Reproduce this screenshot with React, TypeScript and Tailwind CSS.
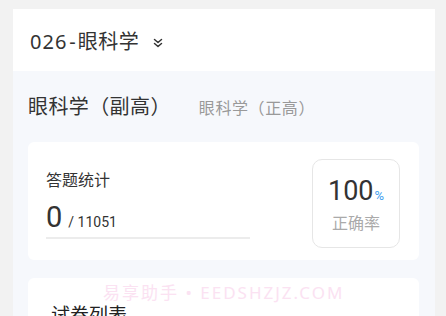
import React from "react";

export default function App() {
  return (
    <div className="relative w-[446px] h-[316px] overflow-hidden bg-[#f2f2f2] pt-[9px] pl-[13px] pr-[11px] font-['Noto_Sans','Noto_Sans_CJK_SC',sans-serif] [text-spacing-trim:space-all]">
      <div className="bg-white h-[330px] flex flex-col">
        <div className="h-[62px] flex items-center pl-[17px] pt-[3px] shrink-0">
          <span className="text-[20px] leading-[28px] text-[#333]">
            <span className="tracking-[1px]">026</span>
            <span className="mx-[2px]">-</span>
            <span className="tracking-[0.5px]">眼科学</span>
          </span>
          <svg width="10" height="10" viewBox="0 0 10 10" className="ml-[14px] mt-[2px]" fill="none" stroke="#333" strokeWidth="1.5" strokeLinecap="round" strokeLinejoin="round">
            <path d="M1.5 1.5 L5 4.5 L8.5 1.5" />
            <path d="M1.5 5.5 L5 8.5 L8.5 5.5" />
          </svg>
        </div>
        <div className="flex-1 bg-[#f6f8fc] pl-[15px] pr-[16px]">
          <div className="h-[71px] flex items-center">
            <span className="text-[20px] leading-[28px] text-[#333] tracking-[0.4px]">眼科学（副高）</span>
            <span className="ml-[28px] text-[16px] leading-[22px] text-[#999] mt-[2px] tracking-[0.6px]">眼科学（正高）</span>
          </div>
          <div className="bg-white rounded-[6px] h-[118px] flex items-start justify-between pt-[17px] pl-[18px] pr-[19px]">
            <div className="mt-[10px] flex flex-col">
              <span className="text-[16px] leading-[22px] text-[#333]">答题统计</span>
              <div className="flex items-baseline w-[204px] h-[48px] border-b-2 border-[#ececec] pt-[9px]">
                <span className="text-[29px] leading-[34px] text-[#333] font-['Roboto',sans-serif]">0</span>
                <span className="ml-[6px] text-[14px] text-[#333] font-['Roboto',sans-serif]">/ 11051</span>
              </div>
            </div>
            <div className="w-[88px] h-[89px] border border-[#e6e6e6] rounded-[10px] flex flex-col items-center justify-center">
              <div className="flex items-baseline leading-none mt-[2px]">
                <span className="text-[27px] leading-[30px] text-[#333] font-['Roboto',sans-serif]">100</span>
                <span className="text-[13px] text-[#3d9ef0] font-['Roboto',sans-serif] ml-[1px]">%</span>
              </div>
              <span className="mt-[6px] text-[16px] leading-[22px] text-[#aaa]">正确率</span>
            </div>
          </div>
          <div className="mt-[18px] bg-white rounded-[6px] h-[80px] pl-[23px] pt-[24px]">
            <span className="text-[19px] leading-[26px] text-[#222]">试卷列表</span>
          </div>
        </div>
      </div>
      <div className="absolute left-[103px] top-[282px] text-[17px] leading-[22px] text-[#fbe2f2] tracking-[2px] whitespace-nowrap">
        易享助手 • EEDSHZJZ.COM
      </div>
    </div>
  );
}
